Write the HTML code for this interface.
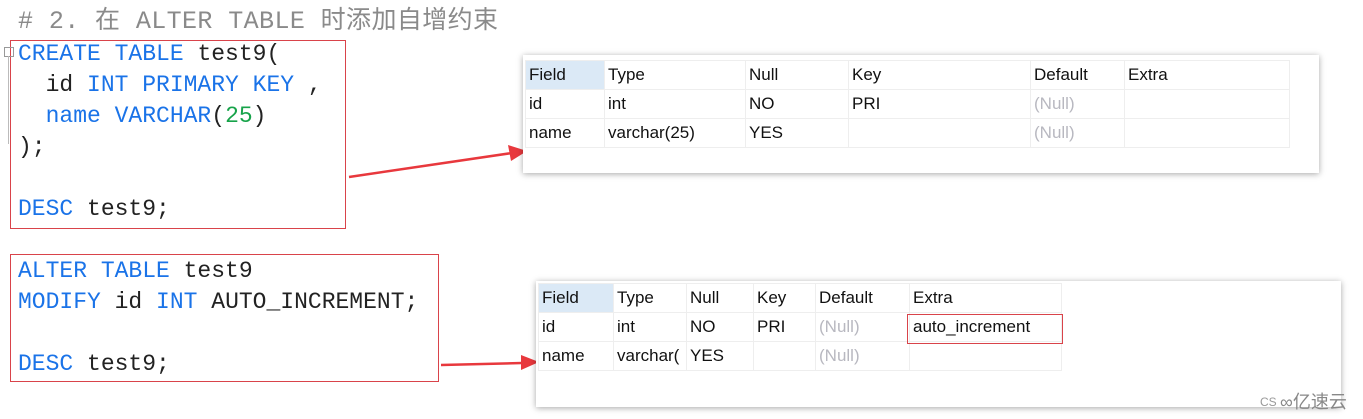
<!DOCTYPE html>
<html><head><meta charset="utf-8"><style>
body{margin:0;width:1363px;height:419px;background:#fff;position:relative;overflow:hidden;font-family:"Liberation Sans",sans-serif}
.code{position:absolute;font-family:"Liberation Mono","Noto Sans CJK SC",monospace;font-size:23px;color:#222;white-space:pre;line-height:31px}
.k{color:#1a73e8}.n{color:#17a34a}.c{color:#8a8a8a}
.box{position:absolute;border:1.5px solid #d9434a}
.panel{position:absolute;background:#fff;box-shadow:0 1px 6px rgba(0,0,0,.35)}
table{position:absolute;border-collapse:collapse;font-size:17px;color:#111;table-layout:fixed}
td{border:1px solid #eee;height:29px;padding:0 0 0 3px;white-space:nowrap;overflow:hidden;box-sizing:border-box}
.h{background:#dbe9f6}.nl{color:#b8b8c0}
</style></head><body>
<div class="code c" style="left:18px;top:6px;font-size:25px;letter-spacing:0.4px">#<span> </span>2. 在 ALTER TABLE 时添加自增约束</div>
<div class="box" style="left:10px;top:40px;width:334px;height:187px"></div>
<div style="position:absolute;left:4px;top:47px;width:8px;height:8px;border:1px solid #999"></div>
<div style="position:absolute;left:8px;top:56px;width:1px;height:88px;background:#bbb"></div>
<div class="code" style="left:18px;top:39px"><span class="k">CREATE TABLE</span> test9(
  id <span class="k">INT PRIMARY KEY</span> ,
  <span class="k">name VARCHAR</span>(<span class="n">25</span>)
);

<span class="k">DESC</span> test9;</div>
<div class="box" style="left:10px;top:254px;width:427px;height:126px"></div>
<div class="code" style="left:18px;top:256px"><span class="k">ALTER TABLE</span> test9
<span class="k">MODIFY</span> id <span class="k">INT</span> AUTO_INCREMENT;

<span class="k">DESC</span> test9;</div>
<svg style="position:absolute;left:0;top:0" width="1363" height="419">
<line x1="349" y1="177" x2="512" y2="153" stroke="#e8383d" stroke-width="2.5"/>
<polygon points="527,151 508,145 511,161" fill="#e8383d"/>
<line x1="441" y1="365" x2="522" y2="363" stroke="#e8383d" stroke-width="2.5"/>
<polygon points="539,362 521,355 521,370" fill="#e8383d"/>
</svg>
<div class="panel" style="left:523px;top:55px;width:796px;height:118px"></div>
<table style="left:525px;top:60px;width:764px">
<tr><td class="h" style="width:79px">Field</td><td style="width:141px">Type</td><td style="width:103px">Null</td><td style="width:182px">Key</td><td style="width:94px">Default</td><td style="width:165px">Extra</td></tr>
<tr><td>id</td><td>int</td><td>NO</td><td>PRI</td><td class="nl">(Null)</td><td></td></tr>
<tr><td>name</td><td>varchar(25)</td><td>YES</td><td></td><td class="nl">(Null)</td><td></td></tr>
</table>
<div class="panel" style="left:536px;top:281px;width:805px;height:126px"></div>
<table style="left:538px;top:283px;width:523px">
<tr><td class="h" style="width:75px">Field</td><td style="width:73px">Type</td><td style="width:67px">Null</td><td style="width:62px">Key</td><td style="width:94px">Default</td><td style="width:152px">Extra</td></tr>
<tr><td>id</td><td>int</td><td>NO</td><td>PRI</td><td class="nl">(Null)</td><td>auto_increment</td></tr>
<tr><td>name</td><td>varchar(</td><td>YES</td><td></td><td class="nl">(Null)</td><td></td></tr>
</table>
<div class="box" style="left:907px;top:314px;width:154px;height:28px;border-width:1px"></div>
<div style="position:absolute;left:1260px;top:395px;font-size:12px;color:#999">CS</div>
<div style="position:absolute;left:1280px;top:388px;font-size:18px;color:#888;font-family:'Liberation Sans','Noto Sans CJK SC',sans-serif">∞亿速云</div>
</body></html>
